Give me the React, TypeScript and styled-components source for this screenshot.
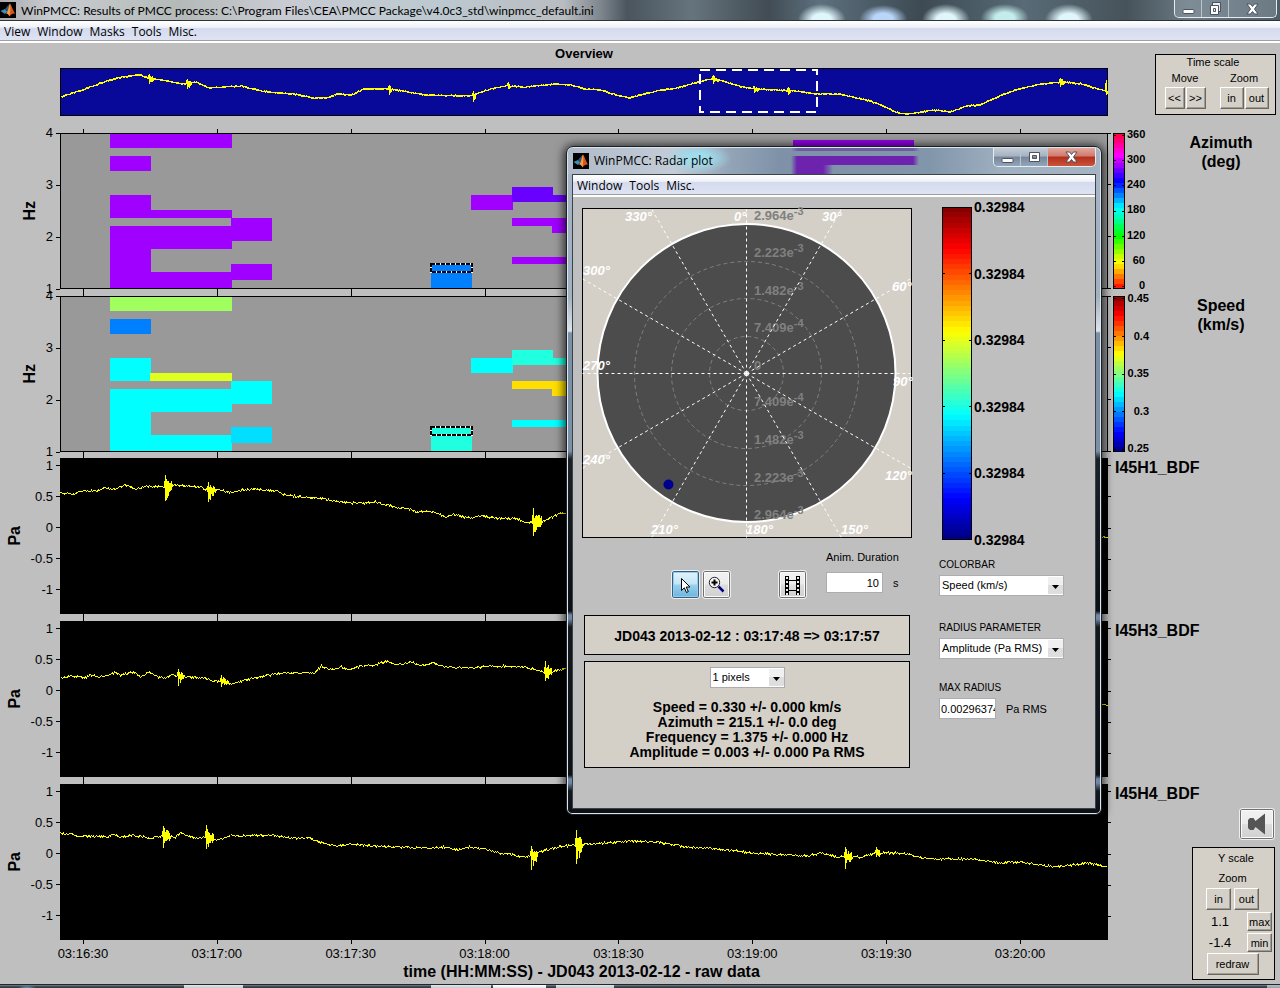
import React from "react";
import styled, { createGlobalStyle, css } from "styled-components";

const GlobalStyle = createGlobalStyle`
  * { box-sizing: border-box; }
  body {
    margin: 0;
    background: #bfbfbf;
    color: #000;
    font-family: "Liberation Sans", Arial, sans-serif;
    font-size: 11px;
  }
  button, select, input { font-family: inherit; font-size: inherit; color: inherit; margin: 0; }
`;

/* ---------- helpers ---------- */

type Point = [number, number];
type Spike = { x: number; top: number; bottom: number; tail: number };

function makeNoise(seed: number) {
  let s = seed;
  return () => {
    s = (s * 16807) % 2147483647;
    return s / 2147483647 - 0.5;
  };
}

function tracePath(points: Point[], spikes: Spike[], seed: number, left: number, jitter: number) {
  const noise = makeNoise(seed);
  const out: string[] = [];
  let k = 0;
  const last = points[points.length - 1][0];
  for (let x = points[0][0]; x <= last; x += 1) {
    while (k < points.length - 2 && x > points[k + 1][0]) k += 1;
    const [x0, y0] = points[k];
    const [x1, y1] = points[k + 1];
    const base = y0 + ((y1 - y0) * (x - x0)) / (x1 - x0);
    const px = x - left + 0.5;
    const spike = spikes.find((s) => x >= s.x && x <= s.x + s.tail);
    if (spike) {
      const step = x - spike.x;
      const decay = 1 - step / (spike.tail + 6);
      const reach = () => (step === 0 ? 1 : decay * (0.3 + (noise() + 0.5) * 0.7));
      const up = base + (spike.top - base) * reach();
      const down = base + (spike.bottom - base) * reach();
      out.push(`${px},${up.toFixed(1)}`, `${px},${down.toFixed(1)}`);
    } else {
      out.push(`${px},${(base + noise() * jitter).toFixed(1)}`);
    }
  }
  return out.join(" ");
}

function jet(t: number) {
  const channel = (c: number) =>
    Math.round(255 * Math.max(0, Math.min(1, 1.5 - Math.abs(4 * t - c))));
  return `rgb(${channel(3)},${channel(2)},${channel(1)})`;
}

const hsv = (t: number) => `hsl(${Math.round(t * 350)},100%,50%)`;

/* ---------- data ---------- */

const TICKS_X = [23, 157, 291, 425, 558, 692, 826, 960];
const TIMES = ["03:16:30", "03:17:00", "03:17:30", "03:18:00", "03:18:30", "03:19:00", "03:19:30", "03:20:00"];

const OVERVIEW: Point[] = [
  [60, 29], [82, 22], [106, 13], [122, 9], [139, 7], [149, 10], [167, 13], [180, 16], [196, 14], [208, 20],
  [241, 18], [261, 23], [277, 25], [294, 26], [312, 30], [326, 30], [337, 26], [351, 27], [363, 21], [388, 21],
  [408, 24], [424, 27], [469, 28], [490, 21], [506, 18], [524, 19], [555, 16], [571, 17], [584, 21], [600, 22],
  [616, 27], [629, 30], [640, 27], [656, 23], [677, 20], [701, 13], [713, 11], [722, 13], [742, 19], [752, 21],
  [795, 23], [815, 26], [840, 26], [852, 29], [869, 33], [881, 37], [895, 44], [905, 46], [922, 44], [932, 42],
  [950, 44], [966, 38], [979, 37], [999, 28], [1015, 22], [1040, 16], [1064, 14], [1081, 16], [1101, 22], [1107, 23],
];
const OVERVIEW_SPIKES: Spike[] = [
  { x: 149, top: 6, bottom: 16, tail: 3 }, { x: 187, top: 11, bottom: 21, tail: 3 },
  { x: 389, top: 17, bottom: 27, tail: 1 }, { x: 473, top: 25, bottom: 34, tail: 1 },
  { x: 508, top: 14, bottom: 21, tail: 1 }, { x: 713, top: 7, bottom: 16, tail: 4 },
  { x: 754, top: 18, bottom: 25, tail: 4 }, { x: 788, top: 19, bottom: 27, tail: 1 },
  { x: 1060, top: 10, bottom: 19, tail: 3 }, { x: 1106, top: 12, bottom: 27, tail: 0 },
];

const CHANNELS: { name: string; points: Point[]; spikes: Spike[]; seed: number }[] = [
  {
    name: "I45H1_BDF",
    seed: 71,
    points: [
      [60, 35], [73, 36], [80, 33], [96, 33], [103, 30], [115, 31], [124, 27], [136, 31], [145, 28], [163, 29],
      [174, 27], [199, 29], [207, 32], [220, 32], [232, 35], [241, 32], [254, 31], [276, 33], [285, 37], [302, 39],
      [318, 40], [333, 43], [346, 45], [367, 45], [375, 44], [394, 49], [409, 51], [417, 54], [432, 54], [446, 59],
      [453, 56], [467, 60], [482, 58], [494, 60], [517, 61], [524, 64], [534, 65], [545, 62], [561, 55], [620, 60],
      [800, 70], [1000, 78], [1107, 79],
    ],
    spikes: [
      { x: 165, top: 17, bottom: 43, tail: 6 }, { x: 208, top: 24, bottom: 44, tail: 7 },
      { x: 533, top: 50, bottom: 78, tail: 8 },
    ],
  },
  {
    name: "I45H3_BDF",
    seed: 913,
    points: [
      [60, 57], [71, 55], [84, 57], [90, 54], [99, 56], [114, 52], [120, 54], [133, 51], [140, 56], [149, 51],
      [157, 56], [165, 57], [172, 54], [184, 56], [203, 57], [212, 60], [221, 60], [230, 63], [245, 59], [260, 56],
      [275, 53], [283, 52], [306, 52], [314, 52], [321, 45], [331, 49], [341, 46], [348, 49], [364, 44], [371, 45],
      [387, 40], [394, 44], [411, 41], [421, 45], [434, 42], [446, 46], [475, 47], [490, 45], [524, 46], [536, 49],
      [545, 52], [565, 48], [800, 70], [1107, 84],
    ],
    spikes: [
      { x: 178, top: 48, bottom: 65, tail: 5 }, { x: 221, top: 54, bottom: 66, tail: 7 },
      { x: 545, top: 40, bottom: 60, tail: 6 },
    ],
  },
  {
    name: "I45H4_BDF",
    seed: 4407,
    points: [
      [60, 49], [79, 52], [107, 53], [112, 50], [121, 53], [132, 51], [149, 54], [163, 52], [175, 53], [180, 49],
      [194, 54], [206, 53], [218, 56], [223, 55], [232, 51], [243, 52], [271, 51], [289, 54], [309, 54], [318, 58],
      [336, 62], [350, 60], [371, 62], [393, 63], [429, 64], [443, 63], [457, 66], [468, 63], [489, 66], [500, 69],
      [525, 73], [535, 70], [543, 67], [557, 63], [576, 61], [586, 60], [607, 59], [632, 57], [657, 58], [686, 63],
      [714, 65], [736, 67], [750, 69], [786, 71], [807, 72], [821, 69], [836, 73], [861, 73], [876, 69], [900, 69],
      [929, 75], [971, 75], [1000, 79], [1021, 78], [1053, 83], [1089, 79], [1107, 83],
    ],
    spikes: [
      { x: 163, top: 42, bottom: 64, tail: 6 }, { x: 206, top: 41, bottom: 65, tail: 7 },
      { x: 531, top: 62, bottom: 86, tail: 5 }, { x: 576, top: 46, bottom: 80, tail: 5 },
      { x: 845, top: 63, bottom: 85, tail: 6 }, { x: 876, top: 63, bottom: 73, tail: 3 },
    ],
  },
];

/* x, y, width, height, azimuth colour, speed colour */
const V = "#a000ff";
const C = "#00ffff";
const CELLS: [number, number, number, number, string, string][] = [
  [50, 1, 122, 14, V, "#a0ff5f"], [50, 23, 41, 15, V, "#0080ff"], [50, 62, 41, 23, V, C],
  [90, 77, 82, 8, V, "#dfff1f"], [50, 93, 122, 23, V, C], [171, 85, 41, 23, V, C],
  [50, 116, 41, 39, V, C], [91, 139, 81, 16, V, C], [171, 131, 41, 16, V, "#00dfff"],
  [371, 131, 41, 24, "#0080ff", "#20ffdf"], [411, 62, 42, 15, V, C],
  [452, 54, 41, 15, "#6a00ff", "#20ffdf"], [492, 62, 41, 7, "#6a00ff", "#20ffdf"],
  [452, 85, 41, 8, V, "#ffdf00"], [492, 85, 41, 15, V, "#ffdf00"], [452, 124, 81, 7, V, C],
];

/* ---------- window chrome ---------- */

const Page = styled.div`
  position: relative;
  display: flex;
  flex-direction: column;
  min-width: 1180px;
`;

const TitleBar = styled.header`
  display: flex;
  align-items: flex-start;
  height: 21px;
  padding: 0 3px 0 0;
  overflow: hidden;
  border-bottom: 1px solid #2b3238;
  font: 12px/21px Lato, "Open Sans", sans-serif;
  background:
    radial-gradient(ellipse 24px 16px at 64.2% 100%, #dff6fb 40%, transparent),
    radial-gradient(ellipse 24px 14px at 69% 95%, #b9d6f8 40%, transparent),
    radial-gradient(ellipse 24px 16px at 73.9% 100%, #dff6fb 40%, transparent),
    radial-gradient(ellipse 24px 14px at 78.5% 90%, #c4ecec 40%, transparent),
    radial-gradient(ellipse 24px 16px at 83.5% 100%, #dff6fb 40%, transparent),
    linear-gradient(90deg, #a9aaac 0, #c9ccd0 4%, #b4bab8 14%, #c9cbd2 22%, #bcc9d0 34%, #b9bdc1 44%, #7c858c 47%, #4a555e 49%, #66747d 54%, #414c54 60%, #5c707d 64%, #3d4a53 72%, #586b76 80%, #46535b 88%, #6b7a83 93%, #4f5d66 100%);
`;

const WindowTitle = styled.h1`
  flex: 1;
  margin: 0;
  padding-left: 5px;
  font: inherit;
  font-weight: 400;
  white-space: nowrap;
`;

const MenuBar = styled.nav`
  display: flex;
  gap: 7px;
  height: 22px;
  padding: 0 4px;
  border-bottom: 2px solid #fff;
  box-shadow: inset 0 -1px 0 #a0a0a0;
  background: linear-gradient(#fff 0, #eef1f8 32%, #d5dbee 36%, #dfe4f3 100%);
`;

const MenuItem = styled.button`
  padding: 0;
  border: 0;
  background: none;
  font: 12px/19px "Open Sans", "Noto Sans", sans-serif;
`;

const Controls = styled.div`
  display: flex;
  flex: none;
  overflow: hidden;
  border: 1px solid #e4edf3;
  border-top: 0;
  border-radius: 0 0 5px 5px;
`;

const ControlButton = styled.button<{ $kind?: "close" | "wide"; $solid?: boolean }>`
  display: flex;
  align-items: center;
  justify-content: center;
  width: ${(p) => (p.$kind ? 47 : 27)}px;
  height: ${(p) => (p.$solid ? 18 : 17)}px;
  padding: 0;
  border: 0;
  border-right: 1px solid #b9c5ce;
  background: ${(p) =>
    p.$kind === "close"
      ? "linear-gradient(#e3a79c 0, #cf7a6b 45%, #b32e1c 50%, #c9553a 100%)"
      : p.$solid
        ? "linear-gradient(#c3ccd6 0, #a6b2c0 45%, #75869a 50%, #94a6ba 100%)"
        : "rgba(160, 175, 186, 0.35)"};
  &:last-child { border-right: 0; }
`;

const MatlabIcon = () => (
  <svg width="16" height="16" viewBox="0 0 16 16">
    <rect width="16" height="16" fill="#000" />
    <path d="M0.5 9 L5 7 L7.5 9.5 L5 12 Z" fill="#3f8fb5" />
    <path d="M5 7 L8 3.5 L9.5 2 L8.8 7.5 L7.5 9.5 Z" fill="#2a5a78" />
    <path d="M10 1.5 C11.5 3 13 9 15.5 12 C13.5 11 12 11.5 9.5 14.5 C9 12.5 7.5 11 6.2 11.5 C8.5 9.5 9 3 10 1.5 Z" fill="#d9541e" />
    <path d="M10 1.5 C10.5 5 10.5 9 9.5 14.5 C9 12.5 7.5 11 6.2 11.5 C8.5 9.5 9 3 10 1.5 Z" fill="#f0a03c" />
  </svg>
);

const MinimizeGlyph = () => (
  <svg width="13" height="13" viewBox="0 0 13 13">
    <rect x="1" y="7.5" width="11" height="4" rx="1" fill="#fff" stroke="#4b5560" />
  </svg>
);
const MaximizeGlyph = () => (
  <svg width="13" height="13" viewBox="0 0 13 13">
    <path fillRule="evenodd" d="M1.5 1.5H11.5V10.5H1.5ZM4.5 4.5V7.5H8.5V4.5Z" fill="#fff" stroke="#4b5560" />
  </svg>
);
const RestoreGlyph = () => (
  <svg width="13" height="14" viewBox="0 0 13 14">
    <rect x="3.5" y="0.5" width="8" height="9" fill="#e8eef2" stroke="#4b5560" />
    <path fillRule="evenodd" d="M1.5 3.5H9.5V12.5H1.5ZM4.5 6.5V9.5H6.5V6.5Z" fill="#fff" stroke="#4b5560" />
  </svg>
);
const CloseGlyph = () => (
  <svg width="13" height="12" viewBox="0 0 13 12">
    <path d="M1 1H4.5L6.5 3.5L8.5 1H12L8.5 6L12 11H8.5L6.5 8.5L4.5 11H1L4.5 6Z" fill="#fff" stroke="#4b5560" />
  </svg>
);

/* ---------- main figure ---------- */

const Figure = styled.main`
  display: grid;
  grid-template-columns: 1fr 172px;
  min-height: 941px;
  background: #bfbfbf;
`;

const Plots = styled.div`
  display: flex;
  flex-direction: column;
  min-width: 0;
`;

const Header = styled.section`
  height: 90px;
  padding: 2px 0 0 60px;
`;

const OverviewTitle = styled.h2`
  margin: 0 0 5px;
  font-size: 13px;
  line-height: 18px;
  text-align: center;
`;

const PlotRow = styled.section<{ $gap?: number }>`
  display: grid;
  grid-template-columns: 60px 1fr;
  height: 156px;
  margin-bottom: ${(p) => p.$gap ?? 7}px;
`;

const AxisSide = styled.div<{ $inset: number }>`
  display: flex;
  justify-content: space-between;
  padding-left: ${(p) => p.$inset}px;
`;

const AxisName = styled.span`
  align-self: center;
  font-size: 16px;
  line-height: 16px;
  font-weight: 700;
  writing-mode: vertical-rl;
  transform: rotate(180deg);
`;

const TickColumn = styled.div<{ $spread?: boolean }>`
  display: flex;
  flex-direction: column;
  font-size: 13px;
  ${(p) =>
    p.$spread
      ? css`
          justify-content: space-between;
          margin: -8px 0;
          line-height: 16px;
        `
      : css`
          margin-top: -8px;
          line-height: 31px;
        `}
`;

const Tick = styled.span`
  display: flex;
  align-items: center;
  justify-content: flex-end;
  gap: 3px;
  &::after {
    content: "";
    width: 4px;
    height: 1px;
    background: #000;
  }
`;

const Chart = styled.svg<{ $h: number }>`
  display: block;
  width: 100%;
  height: ${(p) => p.$h}px;
  overflow: visible;
  shape-rendering: crispEdges;
`;

const TimeAxis = styled.div`
  display: grid;
  grid-template-columns: repeat(8, 1fr);
  margin: -1px 21px 0 16px;
  font-size: 13px;
  line-height: 16px;
  text-align: center;
`;

const TimeName = styled.div`
  padding: 0 0 0 55px;
  font-size: 16px;
  line-height: 19px;
  font-weight: 700;
  text-align: center;
`;

const Side = styled.aside`
  display: flex;
  flex-direction: column;
`;

const SideHeader = styled.div`
  display: flex;
  justify-content: flex-end;
  height: 90px;
  padding: 11px 4px 0 0;
`;

const SideRow = styled.div<{ $h?: number; $gap?: number }>`
  display: flex;
  height: ${(p) => p.$h ?? 156}px;
  margin-bottom: ${(p) => p.$gap ?? 7}px;
  padding-left: 5px;
`;

const Panel = styled.fieldset`
  display: flex;
  flex-direction: column;
  align-items: center;
  min-width: 0;
  margin: 0;
  padding: 0;
  border: 1px solid #000;
  background: #d4d0c8;
`;

const TimePanel = styled(Panel)`
  width: 121px;
  height: 61px;
  line-height: 16px;
`;

const PanelTitle = styled.span`
  padding-right: 5px;
  line-height: 15px;
`;

const TimeGroups = styled.div`
  display: flex;
  gap: 14px;
  padding-left: 2px;
`;

const Group = styled.div`
  display: flex;
  flex-direction: column;
  align-items: center;
  gap: 1px;
`;

const Buttons = styled.div<{ $gap?: number }>`
  display: flex;
  gap: ${(p) => p.$gap ?? 1}px;
`;

const PushButton = styled.button<{ $w: number; $short?: boolean }>`
  width: ${(p) => p.$w}px;
  height: ${(p) => (p.$short ? 19 : 22)}px;
  padding: 0;
  border: 1px solid;
  border-color: #fff #6b6862 #6b6862 #fff;
  box-shadow: inset -1px -1px 0 #a09d97;
  background: #d4d0c8;
  line-height: 16px;
`;

const ScaleLabels = styled.div<{ $shift?: boolean }>`
  display: flex;
  flex-direction: column;
  justify-content: space-between;
  width: 25px;
  height: 165px;
  margin: -6px 0 0 2px;
  padding: ${(p) => (p.$shift ? "2px 3px 1px 0" : "1px 7px 1px 0")};
  font-size: 11px;
  line-height: 12px;
  font-weight: 700;
  text-align: right;
`;

const Quantity = styled.h2`
  flex: 1;
  margin: 0;
  padding-left: 10px;
  font-size: 16px;
  line-height: 19px;
  text-align: center;
`;

const ChannelName = styled.h2`
  margin: 0;
  padding-left: 2px;
  font-size: 16px;
  line-height: 19px;
`;

const SideTools = styled.div`
  display: flex;
  flex-direction: column;
  align-items: flex-end;
  gap: 7px;
  padding: 5px 5px 0 0;
`;

const YPanel = styled(Panel)`
  width: 83px;
  height: 133px;
  padding: 0 2px 0 0;
`;

const YTitle = styled.span`
  padding-left: 7px;
  line-height: 20px;
`;

const YZoom = styled.span`
  line-height: 20px;
`;

const ZoomButtons = styled(Buttons)`
  margin-bottom: 1px;
`;

const YLine = styled.div`
  display: flex;
  align-items: center;
  justify-content: space-between;
  width: 100%;
  height: 21px;
  padding: 0 0 0 14px;
`;

const YValue = styled.span`
  width: 26px;
  font-size: 13px;
  text-align: center;
`;

const ToolButton = styled.button<{ $active?: boolean; $large?: boolean }>`
  display: flex;
  align-items: center;
  justify-content: center;
  width: ${(p) => (p.$large ? 36 : 29)}px;
  height: ${(p) => (p.$large ? 32 : 29)}px;
  padding: 0;
  border: 1px solid #eee;
  border-radius: 3px;
  box-shadow:
    inset 0 0 0 1px ${(p) => (p.$active ? "#2c628b" : "#707070")},
    inset 0 0 0 2px ${(p) => (p.$active ? "#9dc9e2" : "#fbfbfb")};
  background: ${(p) =>
    p.$active
      ? "linear-gradient(#e5f4fc 0, #c4e5f6 48%, #98d1ef 52%, #68b3db 100%)"
      : "linear-gradient(#f2f2f2 0, #ebebeb 48%, #dddddd 52%, #cfcfcf 100%)"};
`;

const ScaleSvg = styled.svg`
  flex: none;
  shape-rendering: crispEdges;
`;

const Scale = ({ w, h, bands, color, ticks, end = 0 }: {
  w: number; h: number; bands: number; color: (t: number) => string; ticks: number; end?: number;
}) => (
  <ScaleSvg width={w} height={h}>
    {Array.from({ length: bands }, (_, i) => {
      const y0 = Math.round((i * h) / bands);
      const y1 = Math.round(((i + 1) * h) / bands);
      return <rect key={i} x="0" y={y0} width={w} height={y1 - y0} fill={color(1 - (i + 0.5) / bands)} />;
    })}
    {Array.from({ length: ticks }, (_, i) => {
      const y = Math.round(end + (i * (h - 1 - 2 * end)) / (ticks - 1)) + 0.5;
      return <path key={i} d={`M0 ${y}H3M${w - 3} ${y}H${w}`} stroke="#000" />;
    })}
    <rect x="0.5" y="0.5" width={w - 1} height={h - 1} fill="none" stroke="#000" />
  </ScaleSvg>
);

const XTicks = ({ first, last }: { first?: boolean; last?: boolean }) => (
  <g stroke="#000">
    {TICKS_X.map((x) => (
      <path key={x} d={`${first ? `M${x + 0.5} -4V0` : ""}M${x + 0.5} 156V${last ? 160 : 163}`} />
    ))}
  </g>
);

const PixelChart = ({ column, first }: { column: 4 | 5; first?: boolean }) => (
  <Chart $h={156} viewBox="0 0 1048 156" preserveAspectRatio="none">
    <rect width="1048" height="156" fill="#999" />
    {CELLS.map((c, i) => (
      <rect key={i} x={c[0]} y={c[1]} width={c[2]} height={c[3]} fill={c[column]} />
    ))}
    {first && <rect x="733" y="7" width="121" height="8" fill="#9600ee" />}
    <rect x="371" y="131" width="41" height="8" fill="none" stroke="#fff" strokeWidth="2" />
    <rect x="371" y="131" width="41" height="8" fill="none" stroke="#000" strokeWidth="2" strokeDasharray="4 1" />
    <rect x="0.5" y="0.5" width="1047" height="155" fill="none" stroke="#000" />
    <path d="M1048 0.5H1051M1048 51.5H1051M1048 103.5H1051M1048 155.5H1051" stroke="#000" />
    <XTicks first={first} />
  </Chart>
);

const ScaledRow = ({ column, first }: { column: 4 | 5; first?: boolean }) => (
  <PlotRow $gap={first ? 7 : 6}>
    <AxisSide $inset={22}>
      <AxisName>Hz</AxisName>
      <TickColumn $spread>
        {["4", "3", "2", "1"].map((t) => <Tick key={t}>{t}</Tick>)}
      </TickColumn>
    </AxisSide>
    <PixelChart column={column} first={first} />
  </PlotRow>
);

/* ---------- radar dialog ---------- */

const Dialog = styled.div`
  position: absolute;
  top: 146px;
  left: 566px;
  width: 536px;
  padding: 0 5px 5px;
  border: 1px solid #1b2026;
  border-radius: 7px 7px 6px 6px;
  box-shadow: inset 0 0 0 1px #dbe5ee, 0 1px 10px 2px rgba(0, 0, 0, 0.75);
  background: linear-gradient(
    #a9b5c4 0, #9fb0c2 120px, #a4b1bf 150px, #dfe3ea 184px, #7b90a7 186px, #7b90a7 304px,
    #1b2128 312px, #0b0e12 464px, #7087a5 468px, #7087a5 472px, #14181d 480px, #0d1115 628px,
    #7087a5 632px, #7087a5 636px, #14181d 644px, #0c0f13 100%
  );
`;

const DialogTitle = styled.div`
  display: flex;
  align-items: flex-start;
  height: 26px;
  margin: 1px -4px 0;
  padding: 0 4px 0 5px;
  border-radius: 6px 6px 0 0;
  font: 12px/26px "Open Sans", "Noto Sans", sans-serif;
  background:
    radial-gradient(ellipse 34px 15px at 130px 10px, #9fdcec 30%, transparent),
    linear-gradient(90deg, transparent 223px, #6d23ae 229px, #6d23ae 345px, transparent 351px) 0 8px / 100% 9px no-repeat,
    linear-gradient(90deg, transparent 223px, #6d23ae 229px, #6d23ae 255px, transparent 265px) 0 17px / 100% 9px no-repeat,
    linear-gradient(90deg, transparent 223px, #6f5aa4 230px, #6f5aa4 345px, transparent 352px) 0 0 / 100% 3px no-repeat,
    linear-gradient(90deg, #b0bbc9 0, #c3ccd7 20%, #94a5b7 30%, #7e91a8 40%, #8296ab 68%, #9fb0c0 82%, #a5b4c3 100%);
`;

const DialogName = styled.h2`
  flex: 1;
  margin: 0;
  padding-left: 5px;
  font: inherit;
`;

const IconSlot = styled.span`
  display: flex;
  flex: none;
  align-items: center;
  height: 100%;
`;

const Client = styled.div`
  display: flex;
  flex-direction: column;
  min-height: 635px;
  border: 1px solid #3a4249;
  background: #bfbfbf;
`;

const ClientBody = styled.div`
  display: grid;
  grid-template-columns: 330px 1fr;
  gap: 27px;
  padding: 11px 9px 0;
`;

const LeftColumn = styled.div`
  display: flex;
  flex-direction: column;
`;

const RightColumn = styled.div`
  display: flex;
  flex-direction: column;
  align-items: flex-start;
`;

const Tools = styled.div`
  display: flex;
  align-items: flex-end;
  height: 61px;
  margin-bottom: 16px;
  padding-left: 89px;
`;

const ToolPair = styled.div`
  display: flex;
  gap: 2px;
  margin-right: 47px;
`;

const Duration = styled.div`
  display: flex;
  flex-direction: column;
  gap: 7px;
  margin: 0 0 6px 19px;
  line-height: 16px;
`;

const InlineField = styled.div`
  display: flex;
  align-items: center;
  gap: 10px;
`;

const TextBox = styled.input<{ $right?: boolean }>`
  width: 57px;
  height: 21px;
  padding: 0 ${(p) => (p.$right ? 3 : 0)}px 0 1px;
  border: 1px solid #abadb3;
  background: #fff;
  text-align: ${(p) => (p.$right ? "right" : "left")};
`;

const InfoBox = styled.div<{ $h: number }>`
  display: flex;
  flex-direction: column;
  align-items: center;
  height: ${(p) => p.$h}px;
  margin: 0 2px 6px;
  padding-top: 5px;
  border: 1px solid #000;
  background: #d4d0c8;
  font-size: 14px;
  font-weight: 700;
  line-height: 15px;
  text-align: center;
`;

const Interval = styled.p`
  margin: 0;
  line-height: 30px;
`;

const Stats = styled.p`
  margin: 12px 0 0;
  white-space: pre-line;
`;

const SelectWrap = styled.span<{ $w: number }>`
  display: grid;
  width: ${(p) => p.$w}px;
  height: 21px;
  font-size: 11px;
  font-weight: 400;
  > * { grid-area: 1 / 1; }
`;

const Select = styled.select`
  appearance: none;
  width: 100%;
  height: 21px;
  padding: 0 2px 2px;
  border: 1px solid #abadb3;
  border-radius: 0;
  background: #fff;
`;

const Arrow = styled.svg`
  justify-self: end;
  margin: 2px 1px;
  pointer-events: none;
`;

const DropDown = ({ id, w, value, label }: { id: string; w: number; value: string; label?: string }) => (
  <SelectWrap $w={w}>
    <Select id={id} aria-label={label} defaultValue={value}>
      <option>{value}</option>
    </Select>
    <Arrow width="15" height="17">
      <rect width="15" height="17" rx="1" fill="#dedede" />
      <rect width="15" height="8" fill="#f0f0f0" />
      <path d="M4 8H11L7.5 12Z" fill="#000" />
    </Arrow>
  </SelectWrap>
);

const ColorScale = styled.div`
  display: flex;
  gap: 2px;
  height: 333px;
  margin: -1px 0 17px 3px;
`;

const ColorValues = styled.div`
  display: flex;
  flex-direction: column;
  justify-content: space-between;
  margin: -8px 0;
  font-size: 14px;
  line-height: 16px;
  font-weight: 700;
`;

const Field = styled.div<{ $h: number }>`
  display: flex;
  flex-direction: column;
  gap: 2px;
  height: ${(p) => p.$h}px;
`;

const Caption = styled.label`
  font-size: 10px;
  line-height: 16px;
`;

const RADIAL: [number, string, string][] = [
  [12, "2.964e", "-3"], [49, "2.223e", "-3"], [87, "1.482e", "-3"], [124, "7.409e", "-4"], [162, "0", ""],
  [198, "7.409e", "-4"], [236, "1.482e", "-3"], [274, "2.223e", "-3"], [311, "2.964e", "-3"],
];
const BEARINGS: [number, number, string][] = [
  [43, 13, "330°"], [152, 13, "0°"], [240, 13, "30°"], [1, 67, "300°"], [310, 83, "60°"], [1, 162, "270°"],
  [311, 178, "90°"], [1, 256, "240°"], [303, 272, "120°"], [69, 326, "210°"], [164, 326, "180°"], [259, 326, "150°"],
];

const RadarSvg = styled.svg`
  display: block;
  overflow: visible;
  font: 700 13px "Liberation Sans", Arial, sans-serif;
`;

const Radar = () => (
  <RadarSvg width="330" height="330" viewBox="0 0 330 330">
    <rect x="0.5" y="0.5" width="329" height="329" fill="#d4d0c8" stroke="#000" />
    <circle cx="164.5" cy="165" r="149" fill="#4c4c4c" stroke="#fff" strokeWidth="2" />
    {[37, 75, 112].map((r) => (
      <circle key={r} cx="164.5" cy="165.5" r={r} fill="none" stroke="#808080" strokeDasharray="4 3" />
    ))}
    {RADIAL.map(([y, value, power]) => (
      <text key={y} x="172" y={y} fill="#808080">
        {value}
        {power && <tspan dy="-5" fontSize="11">{power}</tspan>}
      </text>
    ))}
    <g stroke="#fff" strokeDasharray="3 3">
      {Array.from({ length: 12 }, (_, i) => {
        const a = (i * Math.PI) / 6;
        const sx = Math.sin(a);
        const cy = -Math.cos(a);
        const reach = 164 / Math.max(Math.abs(sx), Math.abs(cy));
        return <line key={i} x1="164.5" y1="165.5" x2={164.5 + sx * reach} y2={165.5 + cy * reach} />;
      })}
    </g>
    {BEARINGS.map(([x, y, label]) => (
      <text key={label} x={x} y={y} fill="#fff" fontStyle="italic">{label}</text>
    ))}
    <circle cx="86.5" cy="276.5" r="5" fill="#00008f" />
  </RadarSvg>
);

const RadarDialog = () => (
  <Dialog role="dialog" aria-label="WinPMCC: Radar plot">
    <DialogTitle>
      <IconSlot><MatlabIcon /></IconSlot>
      <DialogName>WinPMCC: Radar plot</DialogName>
      <Controls>
        <ControlButton $solid aria-label="Minimize"><MinimizeGlyph /></ControlButton>
        <ControlButton $solid aria-label="Maximize"><MaximizeGlyph /></ControlButton>
        <ControlButton $solid $kind="close" aria-label="Close"><CloseGlyph /></ControlButton>
      </Controls>
    </DialogTitle>
    <Client>
      <MenuBar>
        {["Window", "Tools", "Misc."].map((m) => <MenuItem key={m}>{m}</MenuItem>)}
      </MenuBar>
      <ClientBody>
        <LeftColumn>
          <Radar />
          <Tools>
            <ToolPair>
              <ToolButton $active aria-label="Select">
                <svg width="13" height="18" viewBox="0 0 13 18">
                  <path d="M2.5 2.5V14.5L5.3 11.8L7.5 16.5L9.3 15.6L7.2 11H11Z" fill="#fff" stroke="#000" />
                </svg>
              </ToolButton>
              <ToolButton aria-label="Zoom in">
                <svg width="17" height="17" viewBox="0 0 17 17">
                  <path d="M10.5 10.5L15.5 15.5" stroke="#00007f" strokeWidth="2.5" />
                  <circle cx="6.5" cy="6.5" r="5.2" fill="#f6f6f6" stroke="#222" />
                  <path d="M6.5 3.5V9.5M3.5 6.5H9.5" stroke="#000" strokeWidth="2" />
                </svg>
              </ToolButton>
            </ToolPair>
            <ToolButton aria-label="Animate">
              <svg width="17" height="20" viewBox="0 0 17 20" shapeRendering="crispEdges">
                <path d="M3 1V20M14 1V20" stroke="#000" strokeWidth="4" />
                <path d="M3 2V20M14 2V20" stroke="#eee" strokeWidth="2" strokeDasharray="2 2" />
                <path d="M5 5.5H12M5 15.5H12" stroke="#000" />
              </svg>
            </ToolButton>
            <Duration>
              <label htmlFor="duration">Anim. Duration</label>
              <InlineField>
                <TextBox id="duration" $right defaultValue="10" />
                <span>s</span>
              </InlineField>
            </Duration>
          </Tools>
          <InfoBox $h={40}>
            <Interval>{"JD043 2013-02-12 : 03:17:48 => 03:17:57"}</Interval>
          </InfoBox>
          <InfoBox $h={107}>
            <DropDown id="pixels" w={75} value="1 pixels" label="Pixels" />
            <Stats>
              {"Speed = 0.330 +/- 0.000 km/s\nAzimuth = 215.1 +/- 0.0 deg\nFrequency = 1.375 +/- 0.000 Hz\nAmplitude = 0.003 +/- 0.000 Pa RMS"}
            </Stats>
          </InfoBox>
        </LeftColumn>
        <RightColumn>
          <ColorScale>
            <Scale w={30} h={333} bands={64} color={jet} ticks={6} />
            <ColorValues>
              {Array.from({ length: 6 }, (_, i) => <span key={i}>0.32984</span>)}
            </ColorValues>
          </ColorScale>
          <Field $h={63}>
            <Caption htmlFor="colorbar">COLORBAR</Caption>
            <DropDown id="colorbar" w={125} value="Speed (km/s)" />
          </Field>
          <Field $h={60}>
            <Caption htmlFor="radius">RADIUS PARAMETER</Caption>
            <DropDown id="radius" w={125} value="Amplitude (Pa RMS)" />
          </Field>
          <Field $h={63}>
            <Caption htmlFor="max-radius">MAX RADIUS</Caption>
            <InlineField>
              <TextBox id="max-radius" defaultValue="0.00296374" />
              <span>Pa RMS</span>
            </InlineField>
          </Field>
        </RightColumn>
      </ClientBody>
    </Client>
  </Dialog>
);

/* ---------- taskbar ---------- */

const Taskbar = styled.footer`
  height: 4px;
  border-top: 1px solid #20262b;
  background:
    linear-gradient(#e4e8eb, #b8bfc5) 184px 0 / 59px 4px no-repeat,
    linear-gradient(#e4e8eb, #b8bfc5) 431px 0 / 60px 4px no-repeat,
    linear-gradient(#fff, #d8dee2) 493px 0 / 53px 4px no-repeat,
    linear-gradient(#e4e8eb, #b8bfc5) 556px 0 / 58px 4px no-repeat,
    linear-gradient(#b8bfc5, #8a9298) 100% 0 / 13px 4px no-repeat,
    radial-gradient(ellipse 10px 4px at 27px 4px, #6cb2e6, transparent),
    linear-gradient(#8a9399 0, #46525a 34%, #2a343b 100%);
`;

export default function App() {
  return (
    <Page>
      <GlobalStyle />
      <TitleBar>
        <IconSlot><MatlabIcon /></IconSlot>
        <WindowTitle>{"WinPMCC: Results of PMCC process: C:\\Program Files\\CEA\\PMCC Package\\v4.0c3_std\\winpmcc_default.ini"}</WindowTitle>
        <Controls>
          <ControlButton aria-label="Minimize"><MinimizeGlyph /></ControlButton>
          <ControlButton aria-label="Restore"><RestoreGlyph /></ControlButton>
          <ControlButton $kind="wide" aria-label="Close"><CloseGlyph /></ControlButton>
        </Controls>
      </TitleBar>
      <MenuBar>
        {["View", "Window", "Masks", "Tools", "Misc."].map((m) => <MenuItem key={m}>{m}</MenuItem>)}
      </MenuBar>

      <Figure>
        <Plots>
          <Header>
            <OverviewTitle>Overview</OverviewTitle>
            <Chart $h={48} viewBox="0 0 1048 48" preserveAspectRatio="none">
              <rect x="0.5" y="0.5" width="1047" height="47" fill="#080899" stroke="#000" />
              <polyline points={tracePath(OVERVIEW, OVERVIEW_SPIKES, 33, 60, 1)} fill="none" stroke="#ff0" strokeWidth="1.5" />
              <rect x="640" y="2" width="117" height="42" fill="none" stroke="#fff" strokeWidth="2" strokeDasharray="10 6" />
            </Chart>
          </Header>

          <ScaledRow column={4} first />
          <ScaledRow column={5} />

          {CHANNELS.map((c, i) => (
            <PlotRow key={c.name}>
              <AxisSide $inset={7}>
                <AxisName>Pa</AxisName>
                <TickColumn>
                  {["1", "0.5", "0", "-0.5", "-1"].map((t) => <Tick key={t}>{t}</Tick>)}
                </TickColumn>
              </AxisSide>
              <Chart $h={156} viewBox="0 0 1048 156" preserveAspectRatio="none">
                <rect width="1048" height="156" fill="#000" />
                <polyline points={tracePath(c.points, c.spikes, c.seed, 60, 2)} fill="none" stroke="#ff0" />
                <path d="M1048 7.5H1051M1048 38.5H1051M1048 70.5H1051M1048 101.5H1051M1048 132.5H1051" stroke="#000" />
                <XTicks last={i === 2} />
              </Chart>
            </PlotRow>
          ))}

          <TimeAxis>
            {TIMES.map((t) => <span key={t}>{t}</span>)}
          </TimeAxis>
          <TimeName>time (HH:MM:SS) - JD043 2013-02-12 - raw data</TimeName>
        </Plots>

        <Side>
          <SideHeader>
            <TimePanel aria-label="Time scale">
              <PanelTitle>Time scale</PanelTitle>
              <TimeGroups>
                <Group>
                  <span>Move</span>
                  <Buttons>
                    <PushButton $w={20}>&lt;&lt;</PushButton>
                    <PushButton $w={20}>&gt;&gt;</PushButton>
                  </Buttons>
                </Group>
                <Group>
                  <span>Zoom</span>
                  <Buttons>
                    <PushButton $w={24}>in</PushButton>
                    <PushButton $w={24}>out</PushButton>
                  </Buttons>
                </Group>
              </TimeGroups>
            </TimePanel>
          </SideHeader>
          <SideRow>
            <Scale w={12} h={156} bands={31} color={hsv} ticks={7} end={2} />
            <ScaleLabels>
              {["360", "300", "240", "180", "120", "60", "0"].map((t) => <span key={t}>{t}</span>)}
            </ScaleLabels>
            <Quantity>Azimuth<br />(deg)</Quantity>
          </SideRow>
          <SideRow $gap={6}>
            <Scale w={12} h={156} bands={31} color={jet} ticks={5} end={2} />
            <ScaleLabels $shift>
              {["0.45", "0.4", "0.35", "0.3", "0.25"].map((t) => <span key={t}>{t}</span>)}
            </ScaleLabels>
            <Quantity>Speed<br />(km/s)</Quantity>
          </SideRow>
          <SideRow><ChannelName>{CHANNELS[0].name}</ChannelName></SideRow>
          <SideRow><ChannelName>{CHANNELS[1].name}</ChannelName></SideRow>
          <SideRow $h={19} $gap={0}><ChannelName>{CHANNELS[2].name}</ChannelName></SideRow>
          <SideTools>
            <ToolButton $large aria-label="Play sound">
              <svg width="20" height="22" viewBox="0 0 20 22">
                <path d="M1 7L3 5H6.5L8.5 8L18 0.5V21.5L8.5 14L6.5 17H3L1 15Z" fill="#555" />
              </svg>
            </ToolButton>
            <YPanel aria-label="Y scale">
              <YTitle>Y scale</YTitle>
              <YZoom>Zoom</YZoom>
              <ZoomButtons $gap={3}>
                <PushButton $w={25}>in</PushButton>
                <PushButton $w={25}>out</PushButton>
              </ZoomButtons>
              <YLine>
                <YValue>1.1</YValue>
                <PushButton $w={25} $short>max</PushButton>
              </YLine>
              <YLine>
                <YValue>-1.4</YValue>
                <PushButton $w={25} $short>min</PushButton>
              </YLine>
              <PushButton $w={52}>redraw</PushButton>
            </YPanel>
          </SideTools>
        </Side>
      </Figure>
      <Taskbar />
      <RadarDialog />
    </Page>
  );
}
